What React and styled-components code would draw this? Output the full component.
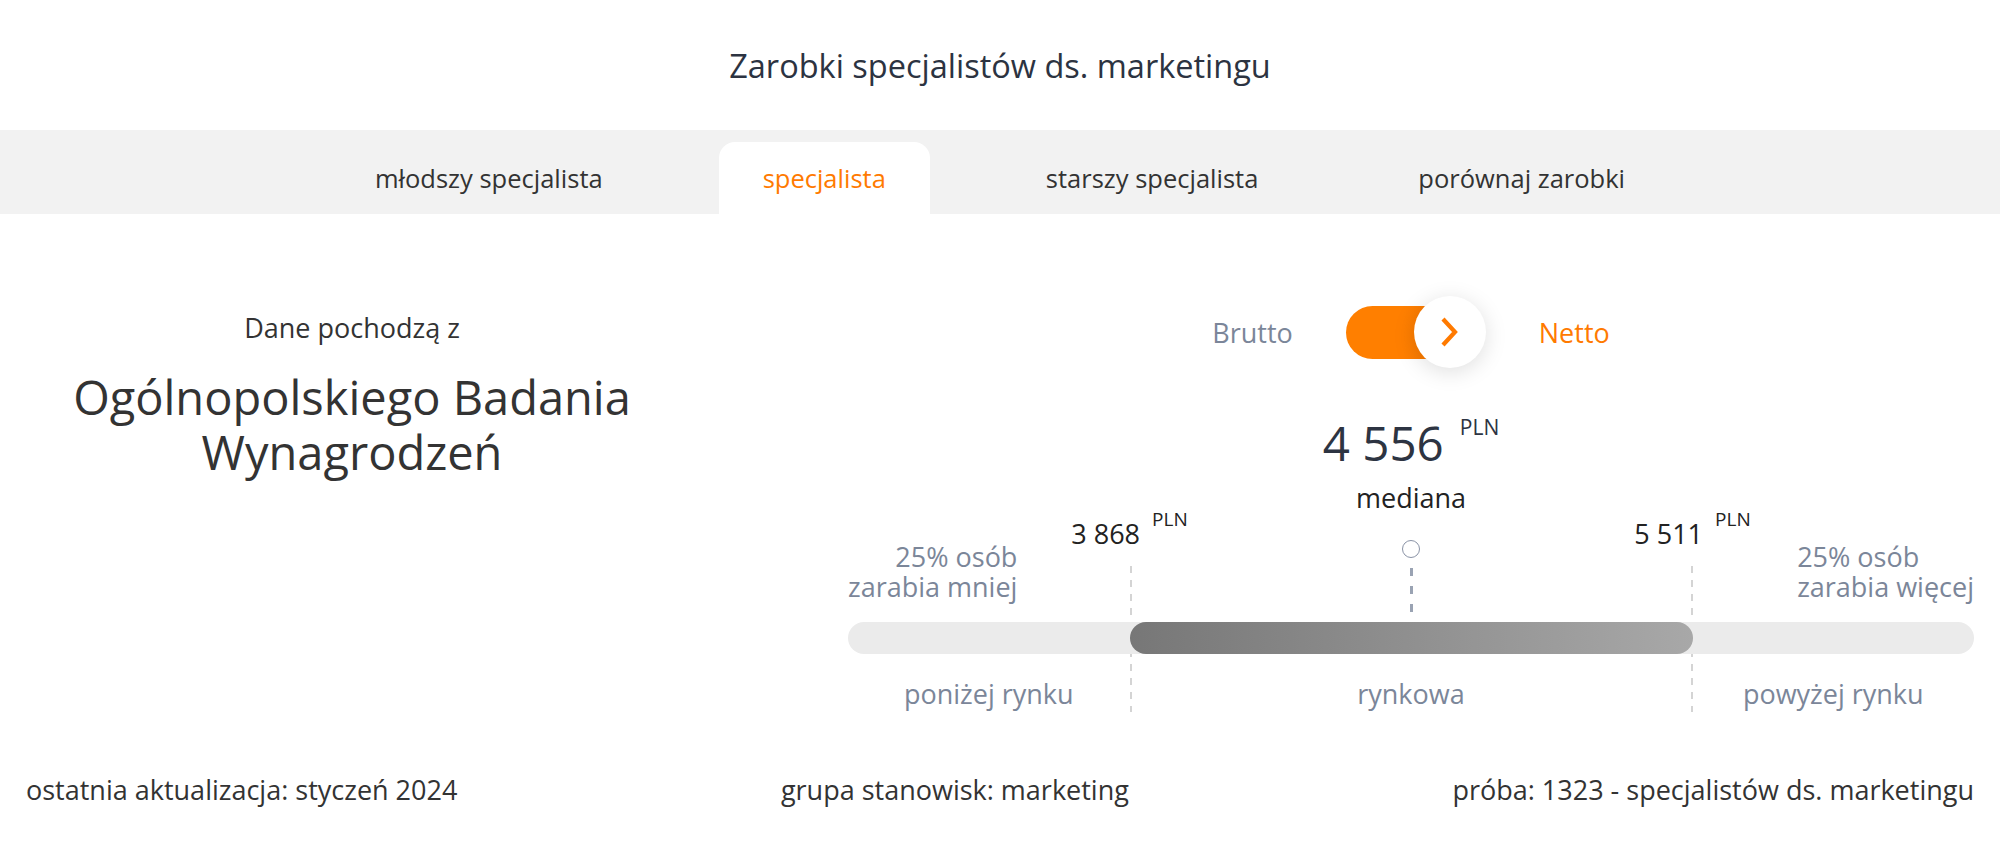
import React from "react";
import styled, { createGlobalStyle } from "styled-components";

const Global = createGlobalStyle`
  html, body { margin: 0; padding: 0; background: #fff; }
  body { font-family: "Open Sans", "Noto Sans", sans-serif; -webkit-font-smoothing: antialiased; }
  * { box-sizing: border-box; }
`;

const Page = styled.div`
  width: 2000px;
  color: #333;
`;

const Header = styled.h1`
  margin: 0;
  height: 130px;
  display: flex;
  align-items: center;
  justify-content: center;
  font-size: 32.5px;
  font-weight: 400;
  color: #2c3341;
`;

const TabBar = styled.nav`
  background: #f2f2f2;
  padding-top: 12px;
  display: flex;
  justify-content: center;
  gap: 72px;
`;

const Tab = styled.div`
  height: 72px;
  padding: 0 44px;
  display: flex;
  align-items: center;
  font-size: 25.5px;
  color: ${(p) => (p.$active ? "#ff7a00" : "#333")};
  background: ${(p) => (p.$active ? "#fff" : "transparent")};
  border-radius: 16px 16px 0 0;
`;

const Main = styled.section`
  display: grid;
  grid-template-columns: 1fr 1126px;
  column-gap: 170px;
  padding: 0 26px;
`;

const Source = styled.div`
  padding-top: 97px;
  text-align: center;
`;

const SourceIntro = styled.div`
  font-size: 27px;
  line-height: 34px;
  color: #333;
`;

const SourceName = styled.div`
  margin-top: 25px;
  font-size: 47px;
  line-height: 55px;
  color: #333;
`;

const ChartColumn = styled.div`
  padding-top: 82px;
  display: flex;
  flex-direction: column;
  align-items: center;
`;

const ToggleRow = styled.div`
  display: flex;
  align-items: center;
  gap: 53px;
  height: 72px;
`;

const ToggleLabel = styled.span`
  font-size: 27px;
  color: ${(p) => (p.$on ? "#ff7a00" : "#7b8699")};
`;

const Switch = styled.div`
  display: flex;
  align-items: center;
`;

const Track = styled.div`
  width: 128px;
  height: 53px;
  border-radius: 27px;
  background: linear-gradient(to right, #ff7f00 0%, #ff7f00 45%, #ee7200 100%);
`;

const Knob = styled.div`
  width: 72px;
  height: 72px;
  margin-left: -60px;
  border-radius: 50%;
  background: #fff;
  box-shadow: 0 4px 22px rgba(0, 0, 0, 0.13);
  display: flex;
  align-items: center;
  justify-content: center;
`;

const MedianValue = styled.div`
  margin-top: 45px;
  display: flex;
  align-items: flex-start;
  color: #2d3442;
`;

const BigNumber = styled.span`
  font-size: 47.5px;
  line-height: 60px;
`;

const Unit = styled.span`
  font-size: ${(p) => p.$size || 21}px;
  line-height: 1;
  margin-left: ${(p) => p.$gap || 16}px;
  margin-top: ${(p) => p.$top || 0}px;
`;

const MedianLabel = styled.div`
  margin-top: 7px;
  font-size: 27px;
  line-height: 36px;
  color: #222;
`;

const Scale = styled.div`
  width: 100%;
  margin-top: -8px;
  display: grid;
  grid-template-columns: 1fr 2fr 1fr;
  grid-template-rows: 114px 32px 58px;
`;

const Boundaries = styled.div`
  grid-column: 2;
  grid-row: 1 / 4;
  margin-top: 58px;
  background:
    repeating-linear-gradient(to bottom, #d4d4d4 0 7px, transparent 7px 14px) left top / 2px 100% no-repeat,
    repeating-linear-gradient(to bottom, #d4d4d4 0 7px, transparent 7px 14px) right top / 2px 100% no-repeat;
`;

const SideNote = styled.div`
  grid-row: 1;
  grid-column: ${(p) => (p.$right ? 3 : 1)};
  justify-self: ${(p) => (p.$right ? "end" : "start")};
  align-self: end;
  margin-bottom: 20px;
  text-align: ${(p) => (p.$right ? "left" : "right")};
  font-size: 27px;
  line-height: 30px;
  color: #7b8699;
`;

const Markers = styled.div`
  grid-row: 1;
  grid-column: 2;
  display: flex;
  justify-content: space-between;
  align-items: flex-start;
`;

const Quartile = styled.div`
  margin-top: 8px;
  display: flex;
  align-items: flex-start;
  color: #222;
  transform: translateX(${(p) => (p.$right ? "50%" : "-50%")});
`;

const QuartileNumber = styled.span`
  font-size: 27px;
  line-height: 36px;
`;

const MedianMark = styled.div`
  margin-top: 32px;
  display: flex;
  flex-direction: column;
  align-items: center;
`;

const Dot = styled.div`
  width: 18px;
  height: 18px;
  border-radius: 50%;
  border: 1.5px solid #8a93a6;
  background: #fff;
`;

const Stem = styled.div`
  margin-top: 10px;
  width: 3px;
  height: 44px;
  background: repeating-linear-gradient(to bottom, #9aa3b3 0 8px, transparent 8px 18px);
`;

const TrackBar = styled.div`
  grid-row: 2;
  grid-column: 1 / -1;
  border-radius: 16px;
  background: #ebebeb;
`;

const MarketBar = styled.div`
  grid-row: 2;
  grid-column: 2;
  border-radius: 16px;
  background: linear-gradient(to right, #777 0%, #a8a8a8 100%);
`;

const RangeLabel = styled.div`
  grid-row: 3;
  grid-column: ${(p) => p.$col};
  padding-top: 22px;
  text-align: center;
  font-size: 27px;
  line-height: 36px;
  color: #7b8699;
`;

const Footer = styled.footer`
  margin-top: 60px;
  padding: 0 26px;
  display: flex;
  justify-content: space-between;
  font-size: 27px;
  line-height: 36px;
  color: #333;
`;

const tabs = ["młodszy specjalista", "specjalista", "starszy specjalista", "porównaj zarobki"];

export default function App() {
  return (
    <Page>
      <Global />
      <Header>Zarobki specjalistów ds. marketingu</Header>
      <TabBar>
        {tabs.map((t) => (
          <Tab key={t} $active={t === "specjalista"}>
            {t}
          </Tab>
        ))}
      </TabBar>
      <Main>
        <Source>
          <SourceIntro>Dane pochodzą z</SourceIntro>
          <SourceName>
            Ogólnopolskiego Badania
            <br />
            Wynagrodzeń
          </SourceName>
        </Source>
        <ChartColumn>
          <ToggleRow>
            <ToggleLabel>Brutto</ToggleLabel>
            <Switch>
              <Track />
              <Knob>
                <svg width="22" height="30" viewBox="0 0 22 30">
                  <path d="M4 2 L16 15 L4 28" fill="none" stroke="#ff7a00" strokeWidth="4.2" />
                </svg>
              </Knob>
            </Switch>
            <ToggleLabel $on>Netto</ToggleLabel>
          </ToggleRow>
          <MedianValue>
            <BigNumber>4 556</BigNumber>
            <Unit $top={4}>PLN</Unit>
          </MedianValue>
          <MedianLabel>mediana</MedianLabel>
          <Scale>
            <Boundaries />
            <SideNote>
              25% osób
              <br />
              zarabia mniej
            </SideNote>
            <Markers>
              <Quartile>
                <QuartileNumber>3 868</QuartileNumber>
                <Unit $size={19} $gap={12} $top={-6}>PLN</Unit>
              </Quartile>
              <MedianMark>
                <Dot />
                <Stem />
              </MedianMark>
              <Quartile $right>
                <QuartileNumber>5 511</QuartileNumber>
                <Unit $size={19} $gap={12} $top={-6}>PLN</Unit>
              </Quartile>
            </Markers>
            <SideNote $right>
              25% osób
              <br />
              zarabia więcej
            </SideNote>
            <TrackBar />
            <MarketBar />
            <RangeLabel $col={1}>poniżej rynku</RangeLabel>
            <RangeLabel $col={2}>rynkowa</RangeLabel>
            <RangeLabel $col={3}>powyżej rynku</RangeLabel>
          </Scale>
        </ChartColumn>
      </Main>
      <Footer>
        <span>ostatnia aktualizacja: styczeń 2024</span>
        <span>grupa stanowisk: marketing</span>
        <span>próba: 1323 - specjalistów ds. marketingu</span>
      </Footer>
    </Page>
  );
}
